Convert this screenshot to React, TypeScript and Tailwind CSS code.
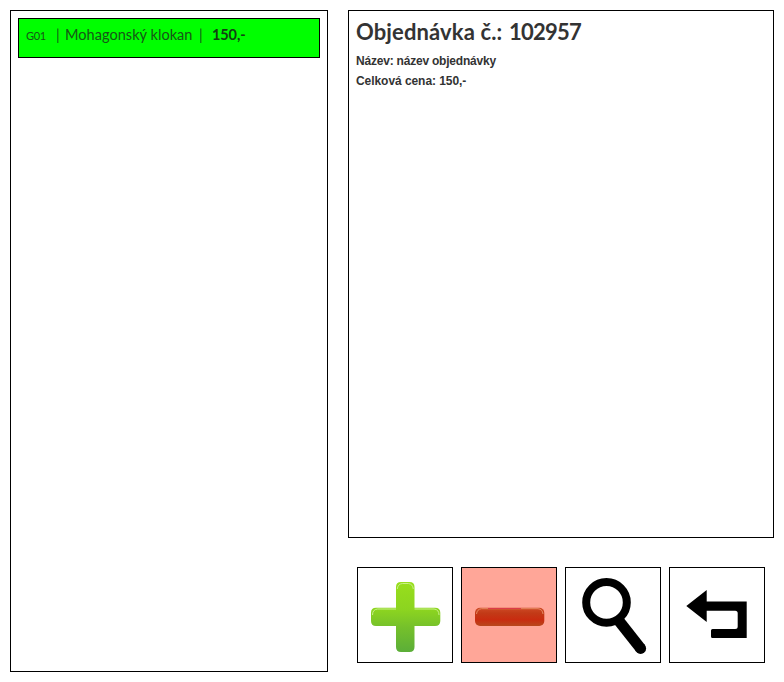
import type { ReactNode } from "react";

function PlusIcon() {
  return (
    <svg viewBox="1 1 94 94" className="block size-full">
      <defs>
        <linearGradient id="green" gradientUnits="userSpaceOnUse" x1="0" y1="15" x2="0" y2="85">
          <stop offset="0" stopColor="#98de1c" />
          <stop offset="0.4" stopColor="#8cd420" />
          <stop offset="0.65" stopColor="#75c02b" />
          <stop offset="1" stopColor="#5bae38" />
        </linearGradient>
      </defs>
      <path
        d="M44 15h8.5q5 0 5 5v20.7H78q5.300 0 5.300 5v8.300q0 5-5.300 5H57.500V80q0 5-5 5H44q-5 0-5-5V59H19q-5 0-5-5v-8.300q0-5 5-5h20V20q0-5 5-5z"
        fill="url(#green)"
      />
      <path
        d="M40.300 22q.5-5 5-5.500h6q4.500 .5 5 5.500M15.500 48q0-5.500 5-6H39M57.500 42H77q5 .5 5 6"
        fill="none"
        stroke="#c9f08a"
        strokeWidth="1"
      />
    </svg>
  );
}

function MinusIcon() {
  return (
    <svg viewBox="1 1 94 94" className="block size-full">
      <defs>
        <linearGradient id="red" x1="0" y1="0" x2="0" y2="1">
          <stop offset="0" stopColor="#cf4a26" />
          <stop offset="0.3" stopColor="#c23a17" />
          <stop offset="0.65" stopColor="#c92c10" />
          <stop offset="1" stopColor="#b8481c" />
        </linearGradient>
      </defs>
      <rect x="14" y="40.7" width="69.300" height="18.300" rx="5" fill="url(#red)" />
      <path d="M15.500 47q.5-4.800 5-5.300H77q4.500 .5 5 5.300" fill="none" stroke="#e58a62" strokeWidth="1" />
      <path d="M27 41.500H60" stroke="#dc3b48" strokeWidth="1" />
    </svg>
  );
}

function SearchIcon() {
  return (
    <svg viewBox="1 1 94 94" className="block size-full" fill="none" stroke="#000">
      <circle cx="41.500" cy="35.400" r="20.300" strokeWidth="8" />
      <path d="M54 54L75.600 81.400" strokeWidth="11" />
      <circle cx="75.600" cy="81.400" r="5.500" fill="#000" stroke="none" />
    </svg>
  );
}

function BackIcon() {
  return (
    <svg viewBox="1 1 94 94" className="block size-full">
      <path
        d="M17.300 39L37.700 23V34.600H77.700V71H43.500Q42 71 42 69.500V63.500Q42 62 43.500 62H66.200Q68.700 62 68.700 59.500V46.200Q68.700 43.700 66.200 43.700H37.700V55Z"
        fill="#000"
      />
    </svg>
  );
}

function ActionButton({ label, tone = "bg-white", children }: { label: string; tone?: string; children: ReactNode }) {
  return (
    <button aria-label={label} className={`size-24 border border-black ${tone}`}>
      {children}
    </button>
  );
}

export default function App() {
  return (
    <main className="flex h-[682px] w-[784px] gap-5 bg-white p-2.5 font-['Lato','Noto_Sans',sans-serif] text-[#333]">
      <section className="h-[662px] w-[318px] border border-black p-[7px]">
        <div className="flex h-10 w-[302px] items-baseline whitespace-nowrap border border-black bg-[#0f0] pl-[7px] pt-[5px] text-[14.500px] leading-[22px] text-[#175517]">
          <span className="w-[30px] text-[11px] tracking-[-0.3px]">G01</span>
          <span className="w-[9px]">|</span>
          <span className="w-[134px] tracking-[0.05px]">Mohagonský klokan</span>
          <span className="w-[13px]">|</span>
          <span className="font-bold tracking-[-0.1px] text-[#124012]">150,-</span>
        </div>
      </section>
      <div className="flex w-[426px] flex-col">
        <section className="h-[528px] border border-black px-[7px] pt-[7px]">
          <h1 className="flex whitespace-nowrap text-[22px] font-bold leading-7">
            <span className="w-[153px] tracking-[0.12px]">Objednávka č.:</span>
            <span className="tracking-[-0.75px]">102957</span>
          </h1>
          <div className="mt-[5px] font-['Liberation_Sans',Arial,sans-serif] text-xs font-bold leading-5">
            <p className="tracking-[-0.21px]">Název: název objednávky</p>
            <p className="tracking-[-0.06px]">Celková cena: 150,-</p>
          </div>
        </section>
        <nav className="mt-[29px] flex gap-2 pl-[9px]">
          <ActionButton label="Přidat"><PlusIcon /></ActionButton>
          <ActionButton label="Odebrat" tone="bg-[#ffa698]"><MinusIcon /></ActionButton>
          <ActionButton label="Hledat"><SearchIcon /></ActionButton>
          <ActionButton label="Zpět"><BackIcon /></ActionButton>
        </nav>
      </div>
    </main>
  );
}
